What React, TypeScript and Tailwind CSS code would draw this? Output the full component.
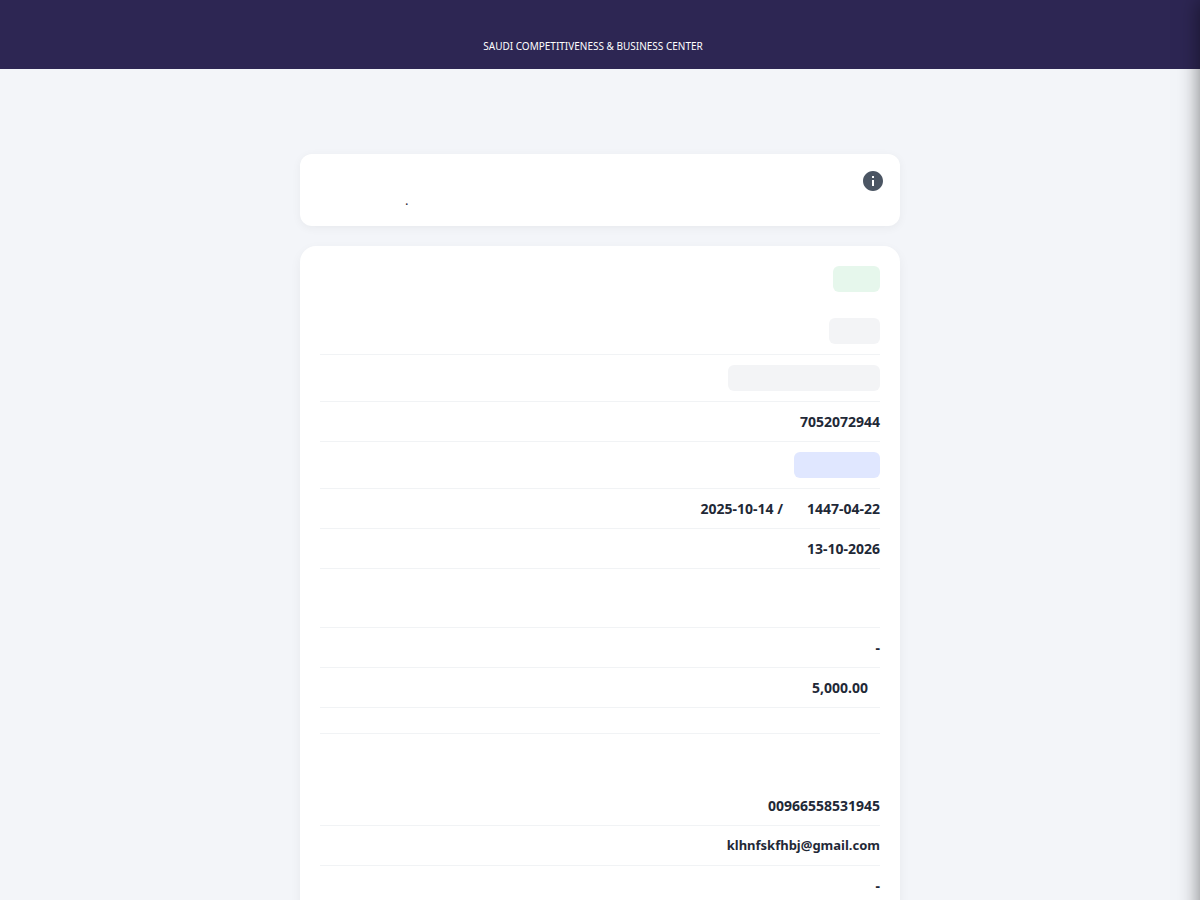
import type { ReactNode } from "react";
import { MdInfo } from "react-icons/md";

function Row({ children }: { children?: ReactNode }) {
  return (
    <div className="flex justify-end border-b border-[#f1f3f5] py-2.5 text-sm leading-[19px] font-bold text-[#1f2937]">
      {children}
    </div>
  );
}

function Pill({ className }: { className: string }) {
  return <span className={`block h-[26px] rounded-md ${className}`} />;
}

export default function App() {
  return (
    <div className="min-h-screen bg-[#f3f5f9] font-['Noto_Sans',sans-serif]">
      <header className="flex h-[69px] items-end justify-center bg-[#2d2653] pr-3.5 pb-4">
        <p className="text-[10px] leading-[14px] text-white">SAUDI COMPETITIVENESS &amp; BUSINESS CENTER</p>
      </header>

      <main className="mx-auto mt-[85px] w-full max-w-[600px]">
        <section className="flex justify-between rounded-xl bg-white px-[15px] pt-[15px] pb-4 shadow-[0_2px_10px_rgba(0,0,0,0.05)]">
          <p className="pt-[21px] pl-[90px] text-[13px] leading-5 text-[#1f2937]">.</p>
          <MdInfo size={24} className="text-[#4b5563]" />
        </section>

        <section className="mt-5 rounded-2xl bg-white p-5 shadow-[0_4px_12px_rgba(0,0,0,0.05)]">
          <div className="mb-4 flex justify-end">
            <Pill className="w-[47px] bg-[#e6f7ec]" />
          </div>
          <Row>
            <Pill className="w-[51px] bg-[#f3f4f6]" />
          </Row>
          <Row>
            <Pill className="w-[152px] bg-[#f3f4f6]" />
          </Row>
          <Row>7052072944</Row>
          <Row>
            <Pill className="w-[86px] bg-[#e0e7ff]" />
          </Row>
          <Row>
            <span className="flex gap-6">
              <span>2025-10-14 /</span>
              <span>1447-04-22</span>
            </span>
          </Row>
          <Row>13-10-2026</Row>
          <Row>
            <span className="h-[38px]" />
          </Row>
          <Row>-</Row>
          <Row>
            <span className="pr-3">5,000.00</span>
          </Row>
          <Row>
            <span className="h-[5px]" />
          </Row>
          <div className="h-[52px]" />
          <Row>00966558531945</Row>
          <Row>
            <a href="mailto:klhnfskfhbj@gmail.com" className="text-[13px]">
              klhnfskfhbj@gmail.com
            </a>
          </Row>
          <Row>-</Row>
        </section>
      </main>

      <aside className="fixed top-0 -bottom-6 left-full w-[280px] bg-white shadow-[0_0_20px_rgba(0,0,0,0.5)]" />
    </div>
  );
}
